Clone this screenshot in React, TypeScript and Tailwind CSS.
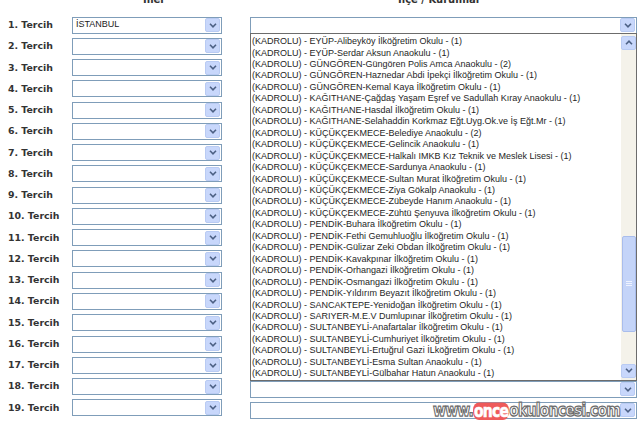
import React from 'react'

const items = [
  'EYÜP-Alibeyköy İlköğretim Okulu - (1)',
  'EYÜP-Serdar Aksun Anaokulu - (1)',
  'GÜNGÖREN-Güngören Polis Amca Anaokulu - (2)',
  'GÜNGÖREN-Haznedar Abdi İpekçi İlköğretim Okulu - (1)',
  'GÜNGÖREN-Kemal Kaya İlköğretim Okulu - (1)',
  'KAĞITHANE-Çağdaş Yaşam Eşref ve Sadullah Kıray Anaokulu - (1)',
  'KAĞITHANE-Hasdal İlköğretim Okulu - (1)',
  'KAĞITHANE-Selahaddin Korkmaz Eğt.Uyg.Ok.ve İş Eğt.Mr - (1)',
  'KÜÇÜKÇEKMECE-Belediye Anaokulu - (2)',
  'KÜÇÜKÇEKMECE-Gelincik Anaokulu - (1)',
  'KÜÇÜKÇEKMECE-Halkalı IMKB Kız Teknik ve Meslek Lisesi - (1)',
  'KÜÇÜKÇEKMECE-Sardunya Anaokulu - (1)',
  'KÜÇÜKÇEKMECE-Sultan Murat İlköğretim Okulu - (1)',
  'KÜÇÜKÇEKMECE-Ziya Gökalp Anaokulu - (1)',
  'KÜÇÜKÇEKMECE-Zübeyde Hanım Anaokulu - (1)',
  'KÜÇÜKÇEKMECE-Zühtü Şenyuva İlköğretim Okulu - (1)',
  'PENDİK-Buhara İlköğretim Okulu - (1)',
  'PENDİK-Fethi Gemuhluoğlu İlköğretim Okulu - (1)',
  'PENDİK-Gülizar Zeki Obdan İlköğretim Okulu - (1)',
  'PENDİK-Kavakpınar İlköğretim Okulu - (1)',
  'PENDİK-Orhangazi İlköğretim Okulu - (1)',
  'PENDİK-Osmangazi İlköğretim Okulu - (1)',
  'PENDİK-Yıldırım Beyazıt İlköğretim Okulu - (1)',
  'SANCAKTEPE-Yenidoğan İlköğretim Okulu - (1)',
  'SARIYER-M.E.V Dumlupınar İlköğretim Okulu - (1)',
  'SULTANBEYLİ-Anafartalar İlköğretim Okulu - (1)',
  'SULTANBEYLİ-Cumhuriyet İlköğretim Okulu - (1)',
  'SULTANBEYLİ-Ertuğrul Gazi İLköğretim Okulu - (1)',
  'SULTANBEYLİ-Esma Sultan Anaokulu - (1)',
  'SULTANBEYLİ-Gülbahar Hatun Anaokulu - (1)',
]

const rows = Array.from({ length: 19 }, (_, i) => i + 1)

function Chevron({ up = false }: { up?: boolean }) {
  return (
    <svg width="8" height="5" viewBox="0 0 8 5" className={up ? 'rotate-180' : ''}>
      <path d="M1 0.8 L4 3.8 L7 0.8" fill="none" stroke="#4d6185" strokeWidth="1.6" />
    </svg>
  )
}

function ArrowBtn({ up = false }: { up?: boolean }) {
  return (
    <div className="flex h-[14px] w-[15px] items-center justify-center rounded-[2px] border border-[#b9cbf3] bg-[#c8d7fb]">
      <Chevron up={up} />
    </div>
  )
}

function Select({ value = '', width }: { value?: string; width: string }) {
  return (
    <div className={`flex h-[17px] ${width} items-center justify-between border border-[#7f9db9] bg-white pl-[3px] pr-[1px]`}>
      <span className="text-[9px] text-[#222]">{value}</span>
      <ArrowBtn />
    </div>
  )
}

export default function App() {
  return (
    <div className="relative h-[426px] w-[640px] overflow-hidden bg-white font-['Liberation_Sans',Arial,sans-serif]">
      <div className="flex h-[14px] font-['DejaVu_Sans',Verdana,sans-serif] text-[10px] font-bold text-[#333]">
        <div className="-mt-[8px] w-[398px] pl-[143px]">İller</div>
        <div className="-mt-[8px]">İlçe / Kurumlar</div>
      </div>

      <div className="flex">
        <div className="flex w-[250px] flex-col pt-[0.4px]">
          {rows.map((n) => (
            <div key={n} className="flex h-[21.28px] items-center">
              <span className="w-[72px] pl-[8px] font-['DejaVu_Sans',Verdana,sans-serif] text-[9.4px] font-bold text-[#333]">
                {n}. Tercih
              </span>
              <Select width="w-[150px]" value={n === 1 ? 'İSTANBUL' : ''} />
            </div>
          ))}
        </div>

        <div className="flex w-[387px] flex-col pt-[2.6px]">
          <Select width="w-[387px]" />
          <div className="-mt-px flex h-[348px] border border-[#6c6c6c] bg-white">
            <div className="flex-1 pl-[1px] pt-[2.5px] text-[9px] leading-[11.45px] text-[#1e1e1e]">
              {items.map((t) => (
                <div key={t} className="whitespace-nowrap">
                  (KADROLU) - {t}
                </div>
              ))}
            </div>
            <div className="flex w-[15px] flex-col items-center bg-[#f4f2ea] py-[2px]">
              <ArrowBtn up />
              <div className="h-[186px]" />
              <div className="flex h-[96px] w-[14px] flex-col items-center justify-center gap-[1px] rounded-[2px] border border-[#a9bdec] bg-[#c4d4f8]">
                <div className="h-px w-[6px] bg-[#eef3ff]" />
                <div className="h-px w-[6px] bg-[#eef3ff]" />
                <div className="h-px w-[6px] bg-[#eef3ff]" />
              </div>
              <div className="flex-1" />
              <ArrowBtn />
            </div>
          </div>
          <Select width="w-[387px]" />
          <div className="mt-[4px]">
            <Select width="w-[387px]" />
          </div>
        </div>
      </div>

      <div className="absolute left-[433px] top-[400px] flex scale-y-125 items-center font-['DejaVu_Sans',Verdana,sans-serif] text-[14px] font-bold tracking-[-0.8px] text-white [-webkit-text-stroke:1px_#6b6b6b]">
        <span>www.</span>
        <span className="rounded-[6px] bg-[#ee5a5a] px-[1px] leading-[14px] [-webkit-text-stroke:0.5px_#ffffff]">once</span>
        <span>okuloncesi.com</span>
      </div>
    </div>
  )
}
